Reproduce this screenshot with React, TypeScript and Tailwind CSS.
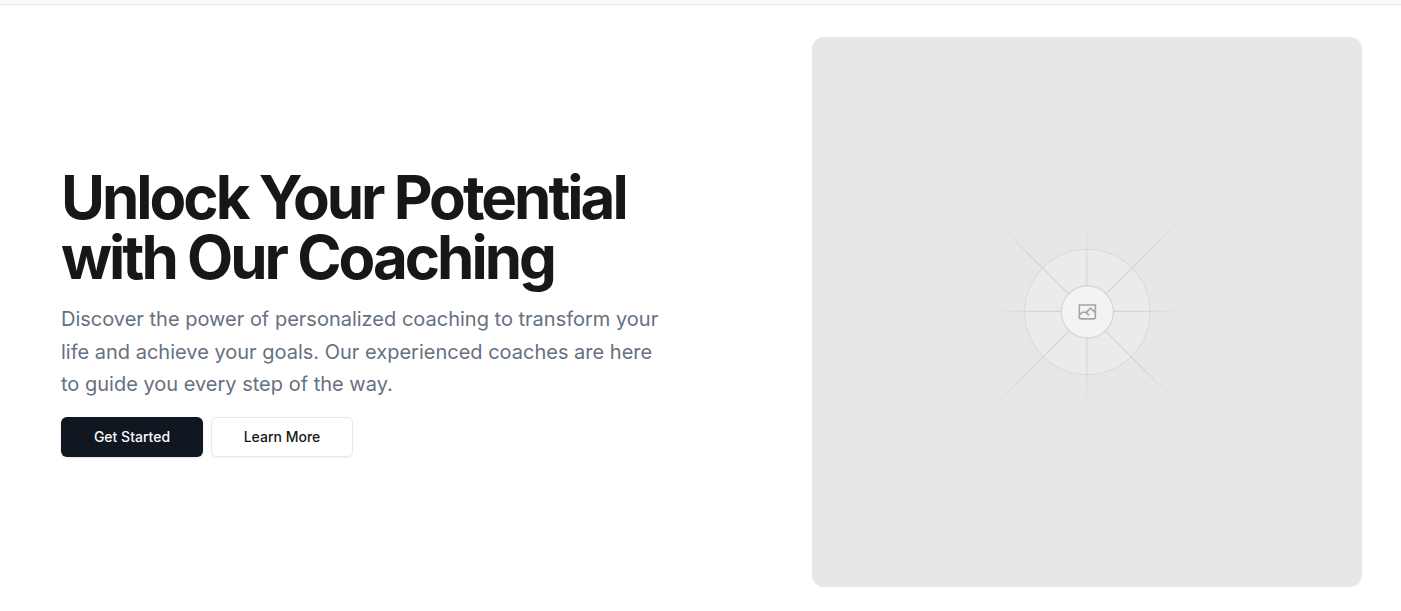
function Fade({ id, x1, y1, x2, y2 }: { id: string; x1: number; y1: number; x2: number; y2: number }) {
  return (
    <linearGradient id={id} x1={x1} y1={y1} x2={x2} y2={y2} gradientUnits="userSpaceOnUse">
      <stop stopColor="#c0c0c0" stopOpacity="0" />
      <stop offset=".208" stopColor="#c0c0c0" />
      <stop offset=".792" stopColor="#c0c0c0" />
      <stop offset="1" stopColor="#c0c0c0" stopOpacity="0" />
    </linearGradient>
  );
}

function Placeholder() {
  return (
    <svg viewBox="0 0 1200 1200" fill="none" role="img" aria-label="Hero" className="block aspect-square w-full rounded-xl bg-[#e7e7e7]">
      <defs>
        <Fade id="fade-rise" x1={400} y1={802} x2={810} y2={392} />
        <Fade id="fade-across" x1={405} y1={598} x2={797} y2={599} />
        <Fade id="fade-up" x1={599} y1={796} x2={600} y2={404} />
        <Fade id="fade-fall" x1={796} y1={797} x2={404} y2={405} />
      </defs>
      <g opacity=".5">
        <g opacity=".5">
          <circle cx="600.7" cy="599.9" r="136.6" fill="#fafafa" />
          <circle cx="600.7" cy="599.9" r="136.6" stroke="#c0c0c0" strokeWidth="2.418" />
        </g>
        <g strokeWidth="2.418">
          <path stroke="url(#fade-rise)" d="M400 802 810 392" />
          <path stroke="url(#fade-across)" d="M404.846 598.671h391.726" />
          <path stroke="url(#fade-up)" d="M599.5 795.742V404.017" />
          <path stroke="url(#fade-fall)" d="m795.717 796.597-391.441-391.44" />
        </g>
        <circle cx="600.7" cy="599.9" r="56.8" fill="#fff" />
        <path
          fill="#666"
          fillRule="evenodd"
          clipRule="evenodd"
          d="M616.426 586.58h-31.434v16.176l3.553-3.554.531-.531h9.068l.074-.074 8.463-8.463h2.565l7.18 7.181V586.58Zm-15.715 14.654 3.698 3.699 1.283 1.282-2.565 2.565-1.282-1.283-5.2-5.199h-6.066l-5.514 5.514-.073.073v2.876a2.418 2.418 0 0 0 2.418 2.418h26.598a2.418 2.418 0 0 0 2.418-2.418v-8.317l-8.463-8.463-7.181 7.181-.071.072Zm19.347 5.442v4.085a6.045 6.045 0 0 1-6.046 6.045h-26.598a6.044 6.044 0 0 1-6.045-6.045v-7.108l1.356-1.355-1.282-1.283.074-.073v-17.989h38.541v23.723Z"
        />
        <circle cx="600.7" cy="599.9" r="56.8" stroke="#c0c0c0" strokeWidth="2.418" />
      </g>
    </svg>
  );
}

export default function App() {
  return (
    <div className="min-h-screen bg-white font-['Inter',sans-serif] text-[#171717]">
      <div className="h-[5px] border-b border-[#e5e5e5] bg-[#fafafa]" />
      <main className="grid items-center gap-12 py-8 pr-[39px] pl-[61px] lg:grid-cols-[minmax(0,1fr)_550px]">
        <section className="flex flex-col items-start gap-4">
          <h1 className="max-w-[600px] text-6xl leading-[60px] font-bold tracking-tighter">
            Unlock Your Potential with Our Coaching
          </h1>
          <p className="max-w-[600px] text-xl leading-relaxed text-[#667080]">
            Discover the power of personalized coaching to transform your life and achieve your goals. Our experienced
            coaches are here to guide you every step of the way.
          </p>
          <div className="flex gap-2">
            <a href="#start" className="flex h-10 w-[142px] items-center justify-center rounded-md bg-[#111720] text-sm font-medium text-gray-50 shadow-sm">
              Get Started
            </a>
            <a href="#more" className="flex h-10 w-[142px] items-center justify-center rounded-md border border-gray-200 bg-white text-sm font-medium shadow-xs">
              Learn More
            </a>
          </div>
        </section>
        <Placeholder />
      </main>
    </div>
  );
}
